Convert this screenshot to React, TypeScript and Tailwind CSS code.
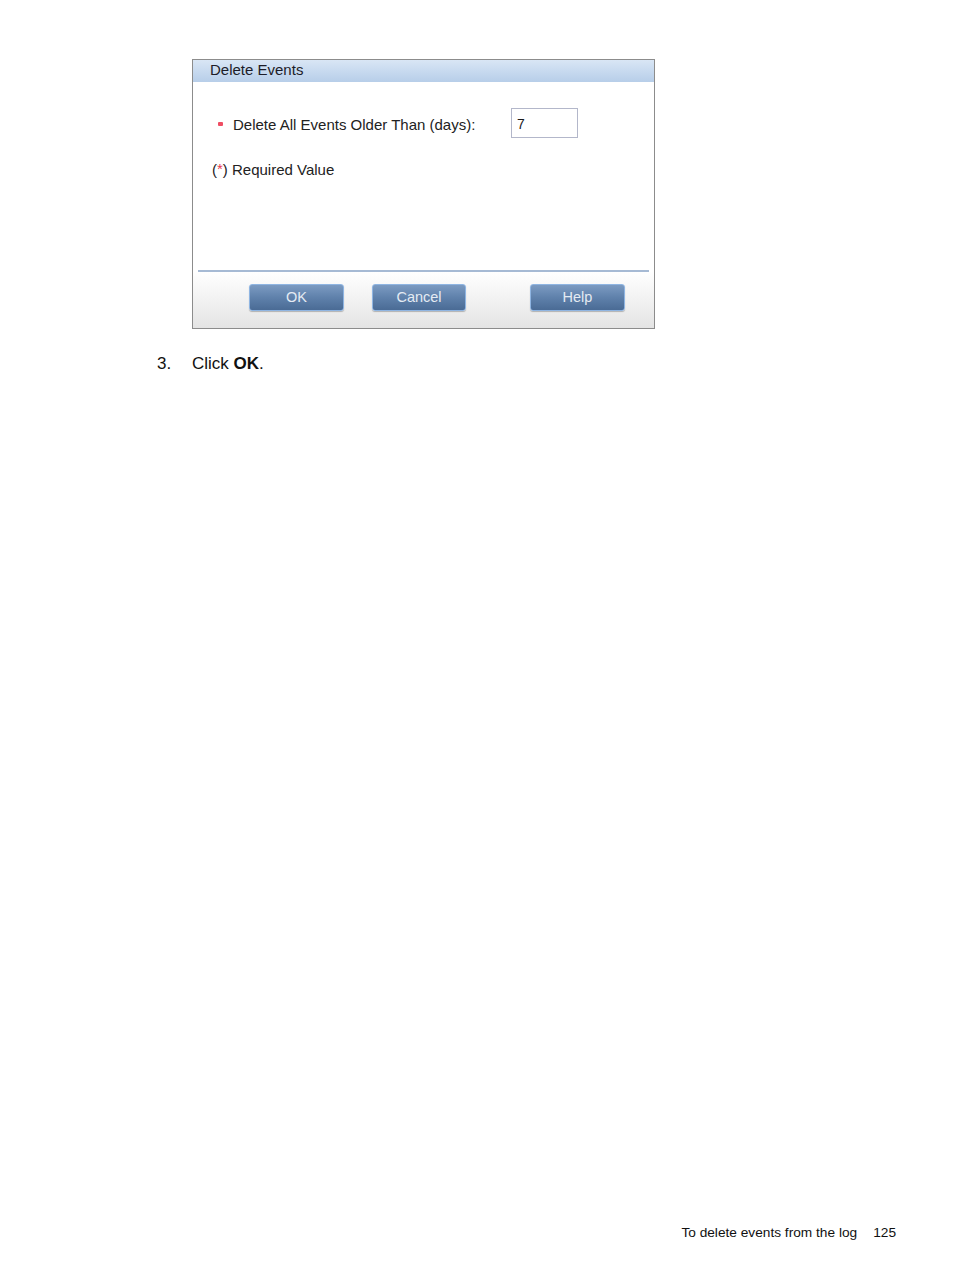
import React from "react";

function DlgButton({ label, className }: { label: string; className?: string }) {
  return (
    <div
      className={
        "h-[27px] flex items-center justify-center rounded-[3px] border border-[#8fb5e2] bg-gradient-to-b from-[#7c9bc2] via-[#5f81ab] to-[#4a6b95] text-[14.5px] text-[#e4ebf3] shadow-[0_1px_1px_rgba(0,0,0,0.25)] " +
        (className ?? "")
      }
    >
      {label}
    </div>
  );
}

export default function App() {
  return (
    <div className="w-[954px] h-[1271px] bg-white flex flex-col font-['Liberation_Sans',Arial,sans-serif]">
      <div className="pt-[59px] pl-[192px]">
        <div className="w-[463px] h-[270px] border border-[#8c8c8c] flex flex-col bg-white">
          <div className="h-[22px] bg-gradient-to-b from-[#d9e6f5] to-[#b7cee9] pl-[17px] text-[15px] leading-[20px] text-[#1c1c28]">
            Delete Events
          </div>
          <div className="h-[188px] flex flex-col text-[15px] text-[#222]">
            <div className="mt-[26px] h-[30px] flex items-center pl-[25px]">
              <span className="w-[5px] h-[4px] mt-[1px] bg-[#ef4d63] rounded-[1px]" />
              <span className="ml-[10px] w-[278px] leading-[18px] pt-[3px]">Delete All Events Older Than (days):</span>
              <div className="w-[67px] h-[30px] border border-[#b3b7ca] bg-white flex items-center pl-[5px] pt-[2px] text-[14px] text-[#1a1a1a]">
                7
              </div>
            </div>
            <div className="mt-[23px] pl-[19px] leading-[18px]">
              (<span className="text-[#e8384f] relative top-[-1px] text-[15px]">*</span>) Required Value
            </div>
          </div>
          <div className="h-[2px] mx-[5px] bg-[#a6bad4]" />
          <div className="h-[56px] bg-gradient-to-b from-white to-[#e4e4e4] flex items-start pt-[12px]">
            <DlgButton label="OK" className="ml-[56px] w-[95px]" />
            <DlgButton label="Cancel" className="ml-[28px] w-[94px]" />
            <DlgButton label="Help" className="ml-[64px] w-[95px]" />
          </div>
        </div>
      </div>
      <div className="mt-[25px] flex text-[17px] leading-[20px] text-[#111]">
        <span className="ml-[157px] w-[35px]">3.</span>
        <span>
          Click <b>OK</b>.
        </span>
      </div>
      <div className="mt-auto pb-[30px] pr-[58px] flex justify-end text-[13.7px] leading-[16px] text-[#111]">
        <span>To delete events from the log</span>
        <span className="ml-[16px]">125</span>
      </div>
    </div>
  );
}
